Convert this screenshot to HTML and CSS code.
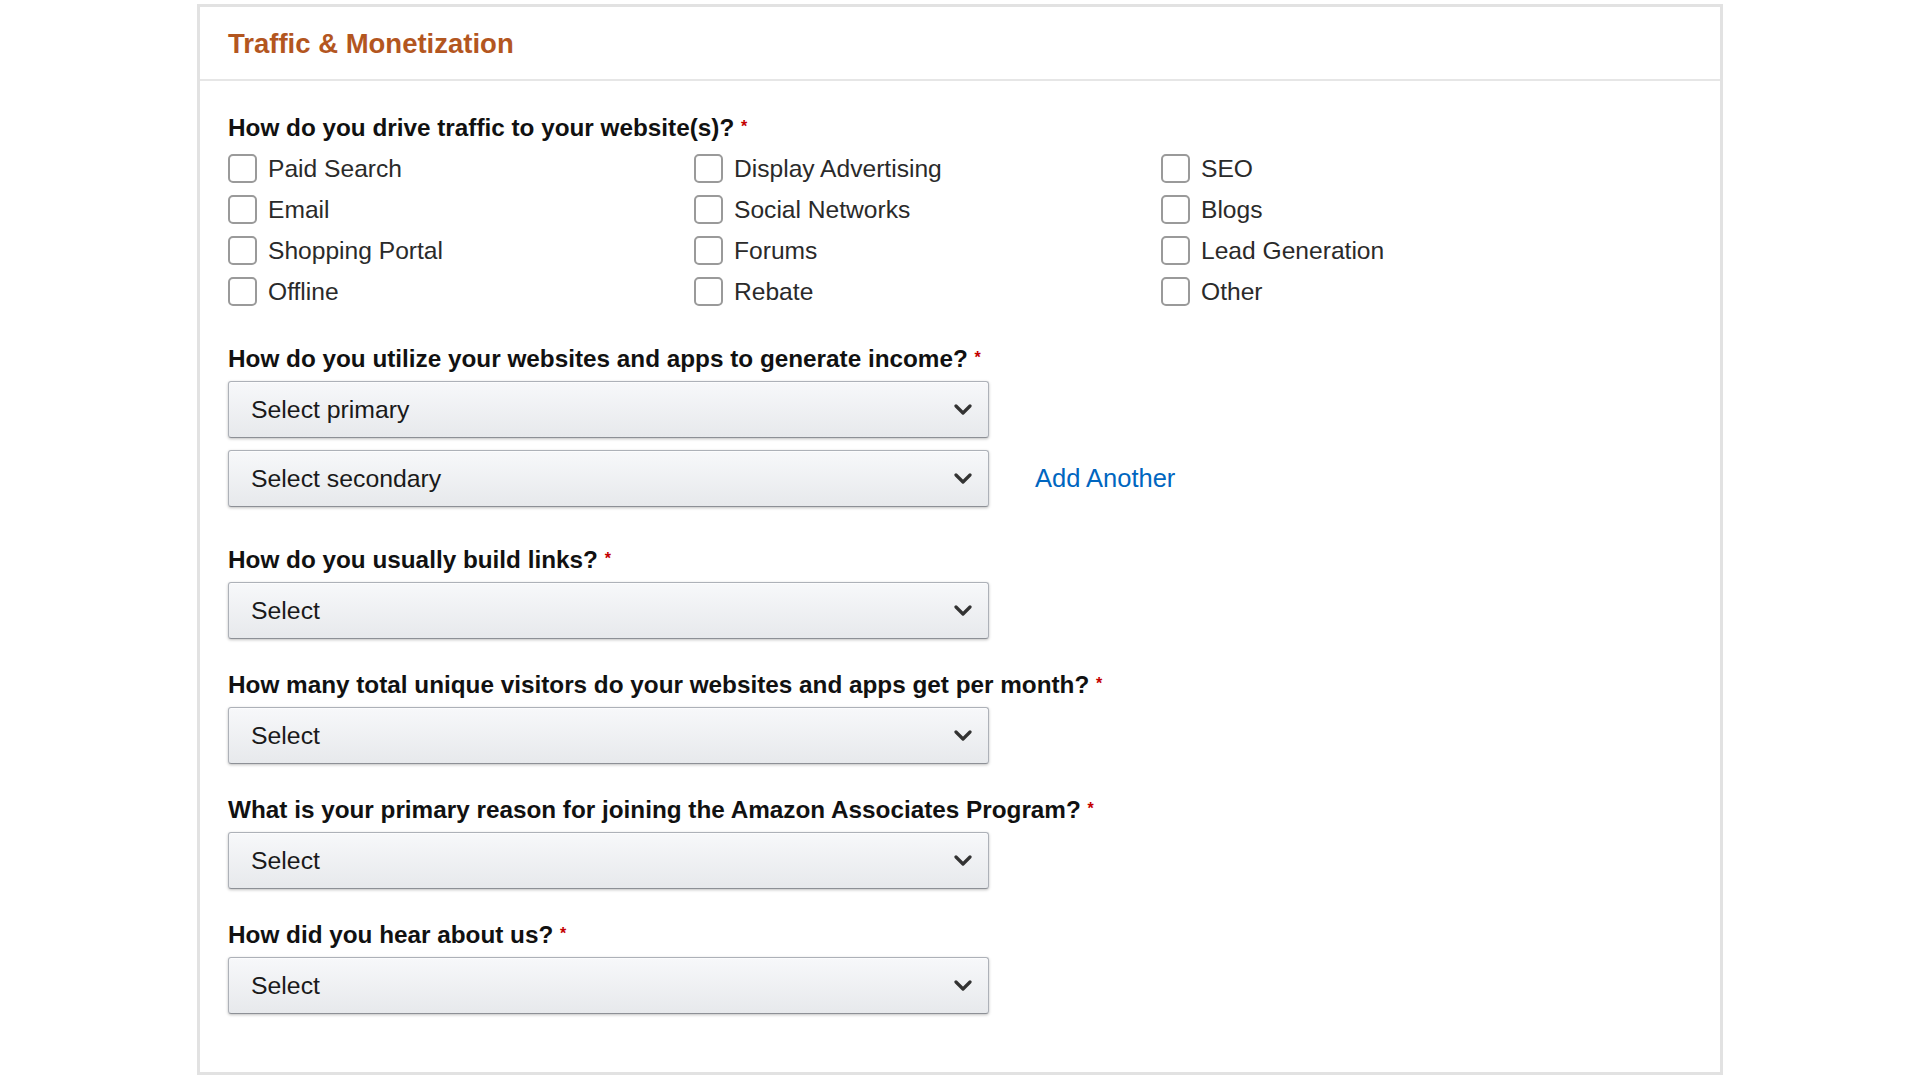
FILE: index.html
```html
<!DOCTYPE html>
<html lang="en">
<head>
    <meta charset="UTF-8">
    <meta name="viewport" content="width=device-width, initial-scale=1.0">
    <title>Traffic &amp; Monetization</title>
    <link rel="stylesheet" href="styles.css">
</head>
<body>
    <div class="card">
        <div class="card-header">
            <h2>Traffic &amp; Monetization</h2>
        </div>

        <form class="card-body" id="traffic-form">
            <!-- traffic sources -->
            <div class="question checks">
                <p class="q-label">How do you drive traffic to your website(s)? <span class="req">*</span></p>
                <div class="check-grid">
                    <label class="check"><input type="checkbox" name="traffic" value="paid">Paid Search</label>
                    <label class="check"><input type="checkbox" name="traffic" value="display">Display Advertising</label>
                    <label class="check"><input type="checkbox" name="traffic" value="seo">SEO</label>
                    <label class="check"><input type="checkbox" name="traffic" value="email">Email</label>
                    <label class="check"><input type="checkbox" name="traffic" value="social">Social Networks</label>
                    <label class="check"><input type="checkbox" name="traffic" value="blogs">Blogs</label>
                    <label class="check"><input type="checkbox" name="traffic" value="shopping">Shopping Portal</label>
                    <label class="check"><input type="checkbox" name="traffic" value="forums">Forums</label>
                    <label class="check"><input type="checkbox" name="traffic" value="lead">Lead Generation</label>
                    <label class="check"><input type="checkbox" name="traffic" value="offline">Offline</label>
                    <label class="check"><input type="checkbox" name="traffic" value="rebate">Rebate</label>
                    <label class="check"><input type="checkbox" name="traffic" value="other">Other</label>
                </div>
            </div>

            <!-- income -->
            <div class="question wide">
                <p class="q-label">How do you utilize your websites and apps to generate income? <span class="req">*</span></p>
                <div class="dropdown">
                    <span>Select primary</span>
                    <svg width="18" height="11" viewBox="0 0 18 11"><polyline points="2,2 9,9 16,2"/></svg>
                </div>
                <div class="select-row">
                    <div class="dropdown">
                        <span>Select secondary</span>
                        <svg width="18" height="11" viewBox="0 0 18 11"><polyline points="2,2 9,9 16,2"/></svg>
                    </div>
                    <a href="#" class="add-link">Add Another</a>
                </div>
            </div>

            <div class="question">
                <p class="q-label">How do you usually build links? <span class="req">*</span></p>
                <div class="dropdown">
                    <span>Select</span>
                    <svg width="18" height="11" viewBox="0 0 18 11"><polyline points="2,2 9,9 16,2"/></svg>
                </div>
            </div>

            <div class="question">
                <p class="q-label">How many total unique visitors do your websites and apps get per month? <span class="req">*</span></p>
                <div class="dropdown">
                    <span>Select</span>
                    <svg width="18" height="11" viewBox="0 0 18 11"><polyline points="2,2 9,9 16,2"/></svg>
                </div>
            </div>

            <div class="question">
                <p class="q-label">What is your primary reason for joining the Amazon Associates Program? <span class="req">*</span></p>
                <div class="dropdown">
                    <span>Select</span>
                    <svg width="18" height="11" viewBox="0 0 18 11"><polyline points="2,2 9,9 16,2"/></svg>
                </div>
            </div>

            <div class="question">
                <p class="q-label">How did you hear about us? <span class="req">*</span></p>
                <div class="dropdown">
                    <span>Select</span>
                    <svg width="18" height="11" viewBox="0 0 18 11"><polyline points="2,2 9,9 16,2"/></svg>
                </div>
            </div>
        </form>
    </div>
</body>
</html>
```

FILE: styles.css
```css
body {
    margin: 0;
    padding-top: 4px;
    background: #fff;
    font-family: "Liberation Sans", Arial, sans-serif;
    color: #111;
}

.card {
    width: 1526px;
    box-sizing: border-box;
    margin: 0 auto;
    border: 3px solid #e2e2e2;
    background: #fff;
}

.card-header {
    height: 74px;
    box-sizing: border-box;
    display: flex;
    align-items: center;
    padding: 2px 0 0 28px;
    border-bottom: 2px solid #e6e6e6;
}

.card-header h2 {
    margin: 0;
    font-size: 27.5px;
    font-weight: bold;
    color: #b3561f;
}

.card-body {
    padding: 31px 28px 58px;
}

.question {
    margin-bottom: 30px;
}

.question:last-child {
    margin-bottom: 0;
}

.question.checks {
    margin-bottom: 31px;
}

.question.wide {
    margin-bottom: 37px;
}

.q-label {
    margin: 0 0 7px;
    font-size: 24.3px;
    line-height: 30px;
    font-weight: bold;
    color: #111;
}

.checks .q-label {
    margin-bottom: 5px;
}

.req {
    color: #c40000;
    font-size: 16px;
    vertical-align: 4px;
}

.check-grid {
    display: grid;
    grid-template-columns: 466px 467px auto;
    grid-auto-rows: 41px;
    align-items: center;
}

.check {
    display: flex;
    align-items: center;
    gap: 11px;
    font-size: 24.6px;
    color: #2a2a2a;
}

.check input {
    appearance: none;
    -webkit-appearance: none;
    width: 29px;
    height: 29px;
    margin: 0;
    border: 2px solid #9a9a9a;
    border-radius: 5px;
    background: #fff;
}

.dropdown {
    width: 761px;
    height: 57px;
    box-sizing: border-box;
    display: flex;
    align-items: center;
    justify-content: space-between;
    padding: 0 16px 0 22px;
    border: 1px solid #adb1b8;
    border-bottom-color: #8d9096;
    border-radius: 3px;
    background: linear-gradient(#f7f8fa, #e7e9ec);
    box-shadow: 0 1px 0 rgba(255, 255, 255, .6) inset, 0 1px 3px rgba(0, 0, 0, .25);
    font-size: 24.8px;
    color: #1a1a1a;
}

.dropdown svg polyline {
    fill: none;
    stroke: #333;
    stroke-width: 3.2;
    stroke-linecap: round;
    stroke-linejoin: round;
}

.select-row {
    display: flex;
    align-items: center;
    gap: 46px;
    margin-top: 12px;
}

.add-link {
    font-size: 25.5px;
    color: #0066c0;
    text-decoration: none;
}
```
